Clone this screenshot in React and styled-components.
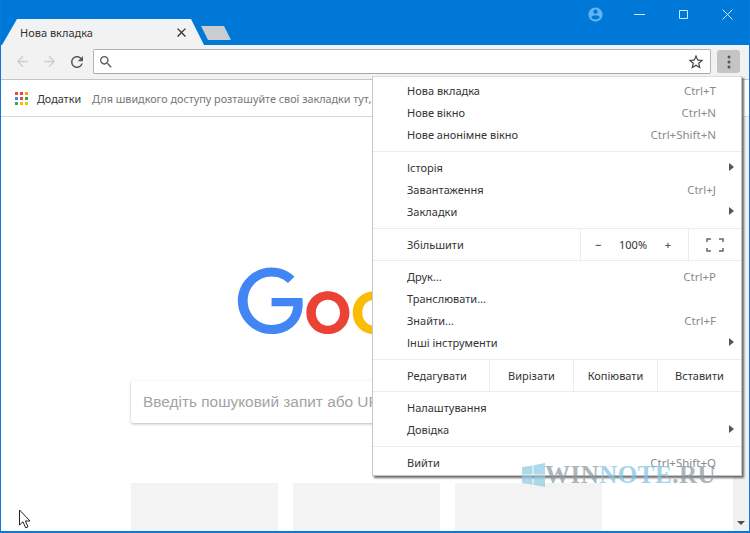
import React from "react";
import styled, { createGlobalStyle } from "styled-components";

const GlobalStyle = createGlobalStyle`
	html, body {
		margin: 0;
		padding: 0;
		background: #fff;
	}
	body {
		font-family: "Noto Sans", "Open Sans", sans-serif;
		font-size: 11px;
		color: #333;
	}
`;

const Window = styled.div`
	position: relative;
	width: 750px;
	height: 533px;
	box-sizing: border-box;
	display: flex;
	flex-direction: column;
	overflow: hidden;
	border: 1px solid #0a7ad8;
	border-top: 0;
	border-bottom-width: 2px;
	background: #fff;
`;

const TitleBar = styled.div`
	height: 45px;
	flex: none;
	display: flex;
	align-items: flex-start;
	background: #0078d7;
`;

const Tabs = styled.div`
	display: flex;
	align-items: flex-end;
	height: 45px;
	padding-left: 1px;
`;

const Tab = styled.div`
	width: 202px;
	height: 26px;
	box-sizing: border-box;
	padding: 0 15px 0 18px;
	display: flex;
	align-items: center;
	justify-content: space-between;
	background: #f2f2f2;
	clip-path: polygon(0 100%, 15px 0, 189px 0, 100% 100%);
	color: #333;
`;

const NewTab = styled.div`
	width: 30px;
	height: 14px;
	margin: 0 0 5px -3px;
	background: #c9cdd2;
	clip-path: polygon(0 0, 23px 0, 100% 100%, 7px 100%);
`;

const WindowControls = styled.div`
	margin-left: auto;
	display: flex;
	align-items: center;
	height: 29px;
`;

const ProfileIcon = styled.svg`
	width: 17px;
	height: 17px;
	margin-right: 13px;
	fill: #63b3f0;
`;

const ControlButton = styled.div`
	width: 44px;
	height: 29px;
	display: flex;
	align-items: center;
	justify-content: center;
	color: #cfe8fb;
`;

const Toolbar = styled.div`
	height: 35px;
	flex: none;
	box-sizing: border-box;
	display: flex;
	align-items: center;
	padding: 0 9px 1px 13px;
	background: #f2f2f2;
	border-bottom: 1px solid #c4c4c4;
`;

const NavButton = styled.div`
	width: 27px;
	flex: none;
	display: flex;
`;

const Omnibox = styled.div`
	flex: 1;
	height: 25px;
	margin-left: -2px;
	box-sizing: border-box;
	display: flex;
	align-items: center;
	justify-content: space-between;
	padding: 0 5px 0 4px;
	background: #fff;
	border: 1px solid #b4b4b4;
	border-bottom-color: #a8a8a8;
	border-radius: 2px;
`;

const MenuButton = styled.div`
	width: 23px;
	height: 23px;
	margin-left: 6px;
	flex: none;
	display: flex;
	align-items: center;
	justify-content: center;
	background: #c4c4c4;
	border-radius: 3px;
`;

const GlyphIcon = styled.svg`
	flex: none;
	fill: ${(p) => p.$color || "#555"};
`;

const Bookmarks = styled.div`
	height: 37px;
	flex: none;
	box-sizing: border-box;
	display: flex;
	align-items: center;
	padding-left: 14px;
	background: #fff;
	border-bottom: 1px solid #d8d8d8;
	white-space: nowrap;
	font-size: 10.8px;
`;

const AppsGrid = styled.div`
	display: grid;
	grid-template-columns: repeat(3, 3px);
	gap: 2px;
	margin-right: 9px;
`;

const AppsDot = styled.span`
	width: 3px;
	height: 3px;
	background: ${(p) => p.$color};
`;

const BookmarkLabel = styled.span`
	color: #333;
	margin-right: 11px;
`;

const BookmarkHint = styled.span`
	color: #757575;
`;

const Body = styled.div`
	flex: 1;
	min-height: 0;
	display: flex;
`;

const Page = styled.div`
	flex: 1;
	overflow: hidden;
	display: flex;
	flex-direction: column;
	align-items: center;
	padding: 150px 1px 0 0;
`;

const Logo = styled.svg`
	width: 264px;
	height: 89px;
	flex: none;
	margin-left: 4px;
`;

const SearchBox = styled.div`
	width: 471px;
	height: 42px;
	flex: none;
	box-sizing: border-box;
	margin-top: 25px;
	padding-left: 12px;
	display: flex;
	align-items: center;
	white-space: nowrap;
	background: #fff;
	border-radius: 2px;
	box-shadow: 0 1px 3px rgba(0, 0, 0, 0.28);
	font-family: "Liberation Sans", Arial, sans-serif;
	font-size: 15.4px;
	color: #a3a3a3;
`;

const Tiles = styled.div`
	display: grid;
	grid-template-columns: repeat(3, 147px);
	gap: 15px;
	margin-top: 60px;
`;

const Tile = styled.div`
	height: 120px;
	background: #f3f3f3;
`;

const Scrollbar = styled.div`
	width: 16px;
	flex: none;
	display: flex;
	align-items: flex-end;
	justify-content: center;
	padding-bottom: 6px;
	box-sizing: border-box;
	background: #f1f1f1;
`;

const ScrollArrow = styled.div`
	width: 0;
	height: 0;
	border-left: 4px solid transparent;
	border-right: 4px solid transparent;
	border-top: 4px solid #505050;
`;

const Menu = styled.div`
	position: absolute;
	left: 371px;
	top: 76px;
	width: 370px;
	height: 400px;
	box-sizing: border-box;
	padding-top: 3px;
	background: #fff;
	border: 1px solid #c6c6c6;
	border-top-color: #dcdcdc;
	box-shadow: 2px 2px 2px rgba(60, 60, 60, 0.75);
`;

const MenuRow = styled.div`
	height: 22px;
	box-sizing: border-box;
	display: flex;
	align-items: center;
	padding: 0 7px 2px 34px;
	color: #333;
`;

const RowLabel = styled.span`
	flex: 1;
`;

const Shortcut = styled.span`
	color: #8a8a8a;
	font-size: 11.5px;
`;

const ArrowSlot = styled.span`
	width: 18px;
	flex: none;
	display: flex;
	justify-content: flex-end;
`;

const SubArrow = styled.span`
	width: 0;
	height: 0;
	border-top: 4px solid transparent;
	border-bottom: 4px solid transparent;
	border-left: 5px solid #555;
`;

const Separator = styled.div`
	height: 1px;
	margin: 5px 0;
	background: #ececec;
`;

const SplitRow = styled.div`
	display: flex;
	height: 33px;
	box-sizing: border-box;
	margin: 5px 0;
	border-top: 1px solid #ececec;
	border-bottom: 1px solid #ececec;
`;

const SplitLabel = styled.div`
	flex: 1;
	display: flex;
	align-items: center;
	padding-left: 34px;
`;

const SplitCell = styled.div`
	width: ${(p) => p.$width}px;
	flex: none;
	box-sizing: border-box;
	display: flex;
	align-items: center;
	justify-content: center;
	border-left: 1px solid #ececec;
`;

const ZoomCell = styled(SplitCell)`
	justify-content: space-between;
	padding: 0 17px 0 14px;
`;

const ZoomSign = styled.span`
	color: #555;
	font-weight: 600;
`;

const Watermark = styled.div`
	position: absolute;
	left: 521px;
	top: 461px;
	display: flex;
	align-items: center;
	opacity: 0.72;
	font-family: "Liberation Serif", serif;
	font-size: 25px;
	font-weight: 700;
	letter-spacing: 0.5px;
	color: #8b9aa3;
	pointer-events: none;
`;

const WatermarkAccent = styled.span`
	color: #7fc4e2;
`;

const Pointer = styled.svg`
	position: absolute;
	left: 17px;
	top: 509px;
`;

const appColors = ["#e8453c", "#e8453c", "#f4a300", "#4285f4", "#e8453c", "#34a853", "#34a853", "#fbbc05", "#fbbc05"];

const groupNew = [
	{ label: "Нова вкладка", keys: "Ctrl+T" },
	{ label: "Нове вікно", keys: "Ctrl+N" },
	{ label: "Нове анонімне вікно", keys: "Ctrl+Shift+N" },
];

const groupHistory = [
	{ label: "Історія", sub: true },
	{ label: "Завантаження", keys: "Ctrl+J" },
	{ label: "Закладки", sub: true },
];

const groupTools = [
	{ label: "Друк...", keys: "Ctrl+P" },
	{ label: "Транслювати..." },
	{ label: "Знайти...", keys: "Ctrl+F" },
	{ label: "Інші інструменти", sub: true },
];

const groupSettings = [
	{ label: "Налаштування" },
	{ label: "Довідка", sub: true },
];

const Rows = ({ items }) =>
	items.map((item) => (
		<MenuRow key={item.label}>
			<RowLabel>{item.label}</RowLabel>
			{item.keys && <Shortcut>{item.keys}</Shortcut>}
			<ArrowSlot>{item.sub && <SubArrow />}</ArrowSlot>
		</MenuRow>
	));

const Icon = ({ d, size = 18, color }) => (
	<GlyphIcon viewBox="0 0 24 24" width={size} height={size} $color={color}>
		<path d={d} />
	</GlyphIcon>
);

const arrowLeft = "M20 11H7.83l5.59-5.59L12 4l-8 8 8 8 1.41-1.41L7.83 13H20v-2z";
const arrowRight = "M4 11h12.17l-5.59-5.59L12 4l8 8-8 8-1.41-1.41L16.17 13H4v-2z";
const reload = "M17.65 6.35C16.2 4.9 14.21 4 12 4c-4.42 0-7.99 3.58-7.99 8s3.57 8 7.99 8c3.73 0 6.84-2.55 7.73-6h-2.08c-.82 2.33-3.04 4-5.65 4-3.31 0-6-2.69-6-6s2.69-6 6-6c1.66 0 3.14.69 4.22 1.78L13 11h7V4l-2.35 2.35z";
const search = "M15.5 14h-.79l-.28-.27C15.41 12.59 16 11.11 16 9.5 16 5.91 13.09 3 9.5 3S3 5.91 3 9.5 5.91 16 9.5 16c1.61 0 3.09-.59 4.23-1.57l.27.28v.79l5 4.99L20.49 19l-4.99-5zm-6 0C7.01 14 5 11.99 5 9.5S7.01 5 9.5 5 14 7.01 14 9.5 11.99 14 9.5 14z";
const star = "M22 9.24l-7.19-.62L12 2 9.19 8.63 2 9.24l5.46 4.73L5.82 21 12 17.27 18.18 21l-1.63-7.03L22 9.24zM12 15.4l-3.76 2.27 1-4.28-3.32-2.88 4.38-.38L12 6.1l1.71 4.04 4.38.38-3.32 2.88 1 4.28L12 15.4z";
const close = "M19 6.41L17.59 5 12 10.59 6.41 5 5 6.41 10.59 12 5 17.59 6.41 19 12 13.41 17.59 19 19 17.59 13.41 12z";
const account = "M12 2C6.48 2 2 6.48 2 12s4.48 10 10 10 10-4.48 10-10S17.52 2 12 2zm0 3c1.66 0 3 1.34 3 3s-1.34 3-3 3-3-1.34-3-3 1.34-3 3-3zm0 14.2c-2.5 0-4.71-1.28-6-3.22.03-1.99 4-3.08 6-3.08 1.99 0 5.97 1.09 6 3.08-1.29 1.94-3.5 3.22-6 3.22z";

const App = () => (
	<>
		<GlobalStyle />
		<Window>
			<TitleBar>
				<Tabs>
					<Tab>
						<span>Нова вкладка</span>
						<Icon d={close} size={15} color="#333" />
					</Tab>
					<NewTab />
				</Tabs>
				<WindowControls>
					<ProfileIcon viewBox="0 0 24 24">
						<path d={account} />
					</ProfileIcon>
					<ControlButton>
						<svg width="11" height="11" viewBox="0 0 11 11">
							<path d="M0 5.5h11" stroke="currentColor" fill="none" />
						</svg>
					</ControlButton>
					<ControlButton>
						<svg width="11" height="11" viewBox="0 0 11 11">
							<path d="M1.5 1.5h8v8h-8z" stroke="currentColor" fill="none" />
						</svg>
					</ControlButton>
					<ControlButton>
						<svg width="11" height="11" viewBox="0 0 11 11">
							<path d="M.5.5l10 10M10.5.5l-10 10" stroke="currentColor" fill="none" />
						</svg>
					</ControlButton>
				</WindowControls>
			</TitleBar>

			<Toolbar>
				<NavButton>
					<Icon d={arrowLeft} size={17} color="#cdcdcd" />
				</NavButton>
				<NavButton>
					<Icon d={arrowRight} size={17} color="#cdcdcd" />
				</NavButton>
				<NavButton>
					<Icon d={reload} size={18} color="#5a5a5a" />
				</NavButton>
				<Omnibox>
					<Icon d={search} size={16} color="#5a5a5a" />
					<Icon d={star} size={18} color="#444" />
				</Omnibox>
				<MenuButton>
					<svg width="4" height="14" viewBox="0 0 4 14" fill="#555">
						<circle cx="2" cy="2" r="1.5" />
						<circle cx="2" cy="7" r="1.5" />
						<circle cx="2" cy="12" r="1.5" />
					</svg>
				</MenuButton>
			</Toolbar>

			<Bookmarks>
				<AppsGrid>
					{appColors.map((color, i) => (
						<AppsDot key={i} $color={color} />
					))}
				</AppsGrid>
				<BookmarkLabel>Додатки</BookmarkLabel>
				<BookmarkHint>Для швидкого доступу розташуйте свої закладки тут,</BookmarkHint>
			</Bookmarks>

			<Body>
				<Page>
					<Logo viewBox="0 0 272 92">
						<path fill="#EA4335" d="M115.75 47.18c0 12.77-9.99 22.18-22.25 22.18s-22.25-9.41-22.25-22.18C71.25 34.32 81.24 25 93.5 25s22.25 9.32 22.25 22.18zm-9.74 0c0-7.98-5.79-13.44-12.51-13.44S80.99 39.2 80.99 47.18c0 7.9 5.79 13.44 12.51 13.44s12.51-5.55 12.51-13.44z" />
						<path fill="#FBBC05" d="M163.75 47.18c0 12.77-9.99 22.18-22.25 22.18s-22.25-9.41-22.25-22.18c0-12.85 9.99-22.18 22.25-22.18s22.25 9.32 22.25 22.18zm-9.74 0c0-7.98-5.79-13.44-12.51-13.44s-12.51 5.46-12.51 13.44c0 7.9 5.79 13.44 12.51 13.44s12.51-5.55 12.51-13.44z" />
						<path fill="#4285F4" d="M35.29 41.41V32H67c.31 1.64.47 3.58.47 5.68 0 7.06-1.93 15.79-8.15 22.01-6.05 6.3-13.78 9.66-24.02 9.66C16.32 69.35.36 53.89.36 34.91.36 15.93 16.32.47 35.3.47c10.5 0 17.98 4.12 23.6 9.49l-6.64 6.64c-4.03-3.78-9.49-6.72-16.97-6.72-13.86 0-24.7 11.17-24.7 25.03 0 13.86 10.84 25.03 24.7 25.03 8.99 0 14.11-3.61 17.39-6.89 2.66-2.66 4.41-6.46 5.1-12.55l-22.49.01z" />
					</Logo>
					<SearchBox>Введіть пошуковий запит або URL</SearchBox>
					<Tiles>
						<Tile />
						<Tile />
						<Tile />
					</Tiles>
				</Page>
				<Scrollbar>
					<ScrollArrow />
				</Scrollbar>
			</Body>

			<Menu>
				<Rows items={groupNew} />
				<Separator />
				<Rows items={groupHistory} />
				<SplitRow>
					<SplitLabel>Збільшити</SplitLabel>
					<ZoomCell $width={108}>
						<ZoomSign>−</ZoomSign>
						<span>100%</span>
						<ZoomSign>+</ZoomSign>
					</ZoomCell>
					<SplitCell $width={53}>
						<svg width="18" height="14" viewBox="0 0 18 14" fill="none" stroke="#666" strokeWidth="1.5">
							<path d="M1 4V1h4M13 1h4v3M1 10v3h4M13 13h4v-3" />
						</svg>
					</SplitCell>
				</SplitRow>
				<Rows items={groupTools} />
				<SplitRow>
					<SplitLabel>Редагувати</SplitLabel>
					<SplitCell $width={84}>Вирізати</SplitCell>
					<SplitCell $width={84}>Копіювати</SplitCell>
					<SplitCell $width={84}>Вставити</SplitCell>
				</SplitRow>
				<Rows items={groupSettings} />
				<Separator />
				<MenuRow>
					<RowLabel>Вийти</RowLabel>
					<Shortcut>Ctrl+Shift+Q</Shortcut>
					<ArrowSlot />
				</MenuRow>
			</Menu>

			<Watermark>
				<svg width="23" height="24" viewBox="0 0 23 24" fill="#8fcbe2">
					<path d="M0 4l10.5-1.6V11.5H0zM11.5 2.2L23 0v11.5H11.5zM0 12.5h10.5v9.2L0 20zM11.5 12.5H23V24l-11.5-2.2z" />
				</svg>
				<span>
					WIN<WatermarkAccent>NOTE</WatermarkAccent>.RU
				</span>
			</Watermark>

			<Pointer width="14" height="20" viewBox="0 0 14 20">
				<path d="M1.5 1v15l3.5-3.2 2.6 6 2.4-1-2.6-5.8h4.6z" fill="#fff" stroke="#222" strokeWidth="1" />
			</Pointer>
		</Window>
	</>
);

export default App;
